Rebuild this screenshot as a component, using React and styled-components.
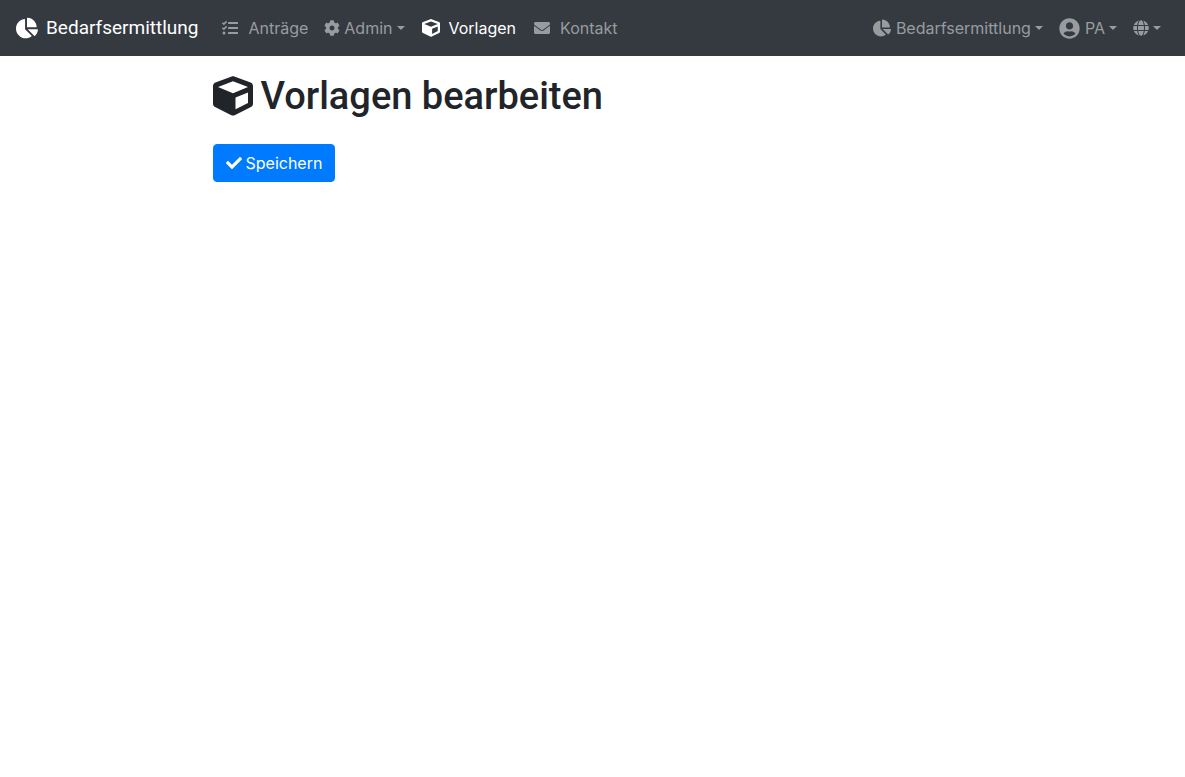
import React from "react";
import styled, { createGlobalStyle } from "styled-components";
import { FaChartPie, FaTasks, FaCog, FaCube, FaEnvelope, FaUserCircle, FaGlobe, FaCheck } from "react-icons/fa";

const GlobalStyle = createGlobalStyle`
  *, *::before, *::after { box-sizing: border-box; }
  body {
    margin: 0;
    background: #fff;
    color: #212529;
    font: 400 16px/24px Inter, "Liberation Sans", sans-serif;
  }
`;

const Navbar = styled.nav`
  display: flex;
  align-items: center;
  min-height: 56px;
  padding: 8px 16px;
  background: #343a40;
  white-space: nowrap;
`;

const Brand = styled.a`
  display: flex;
  align-items: center;
  gap: 8px;
  margin-right: 14px;
  color: #fff;
  font-family: Roboto, sans-serif;
  font-size: 19px;
  line-height: 32px;
  text-decoration: none;
  svg { width: 22px; height: 22px; }
`;

const NavList = styled.ul`
  display: flex;
  margin: 0;
  margin-left: ${(p) => (p.$end ? "auto" : "0")};
  padding: 0;
  list-style: none;
`;

const NavLink = styled.a`
  display: flex;
  align-items: center;
  gap: ${(p) => (p.$wide ? "8px" : "4px")};
  min-height: 40px;
  padding: 8px;
  color: ${(p) => (p.$active ? "#fff" : "#999c9f")};
  font-size: 16px;
  text-decoration: none;
`;

const IconBox = styled.span`
  display: flex;
  justify-content: center;
  flex: none;
  width: ${(p) => p.$width}px;
`;

const Caret = styled.span`
  border: 4px solid transparent;
  border-top-color: currentColor;
  border-bottom: 0;
`;

const Container = styled.main`
  max-width: 790px;
  margin: 0 auto;
  padding: 16px 15px;
`;

const Title = styled.h1`
  display: flex;
  align-items: center;
  gap: 8px;
  margin: 0 0 24px;
  font-family: Roboto, sans-serif;
  font-size: 38px;
  font-weight: 500;
  line-height: 48px;
`;

const SaveButton = styled.button`
  display: flex;
  align-items: center;
  gap: 4px;
  padding: 6px 12px;
  border: 1px solid #007bff;
  border-radius: 4px;
  background: #007bff;
  color: #fff;
  font: inherit;
  cursor: pointer;
`;

const Item = ({ icon: Icon, size = 16, box = 16, wide, active, caret, label, name }) => (
  <li>
    <NavLink href="#" $wide={wide} $active={active} aria-label={name} aria-current={active ? "page" : undefined}>
      <IconBox $width={box}><Icon size={size} aria-hidden="true" /></IconBox>
      {label && <span>{label}</span>}
      {caret && <Caret />}
    </NavLink>
  </li>
);

export default function App() {
  return (
    <>
      <GlobalStyle />
      <Navbar>
        <Brand href="#"><FaChartPie aria-hidden="true" />Bedarfsermittlung</Brand>
        <NavList>
          <Item icon={FaTasks} box={20} wide label="Anträge" />
          <Item icon={FaCog} caret label="Admin" />
          <Item icon={FaCube} size={18} box={20} wide active label="Vorlagen" />
          <Item icon={FaEnvelope} box={20} wide label="Kontakt" />
        </NavList>
        <NavList $end>
          <Item icon={FaChartPie} size={18} box={20} caret label="Bedarfsermittlung" />
          <Item icon={FaUserCircle} size={21} box={22} caret label="PA" />
          <Item icon={FaGlobe} caret name="Sprache" />
        </NavList>
      </Navbar>
      <Container>
        <Title><FaCube size={40} aria-hidden="true" />Vorlagen bearbeiten</Title>
        <SaveButton type="button"><FaCheck size={16} aria-hidden="true" />Speichern</SaveButton>
      </Container>
    </>
  );
}
